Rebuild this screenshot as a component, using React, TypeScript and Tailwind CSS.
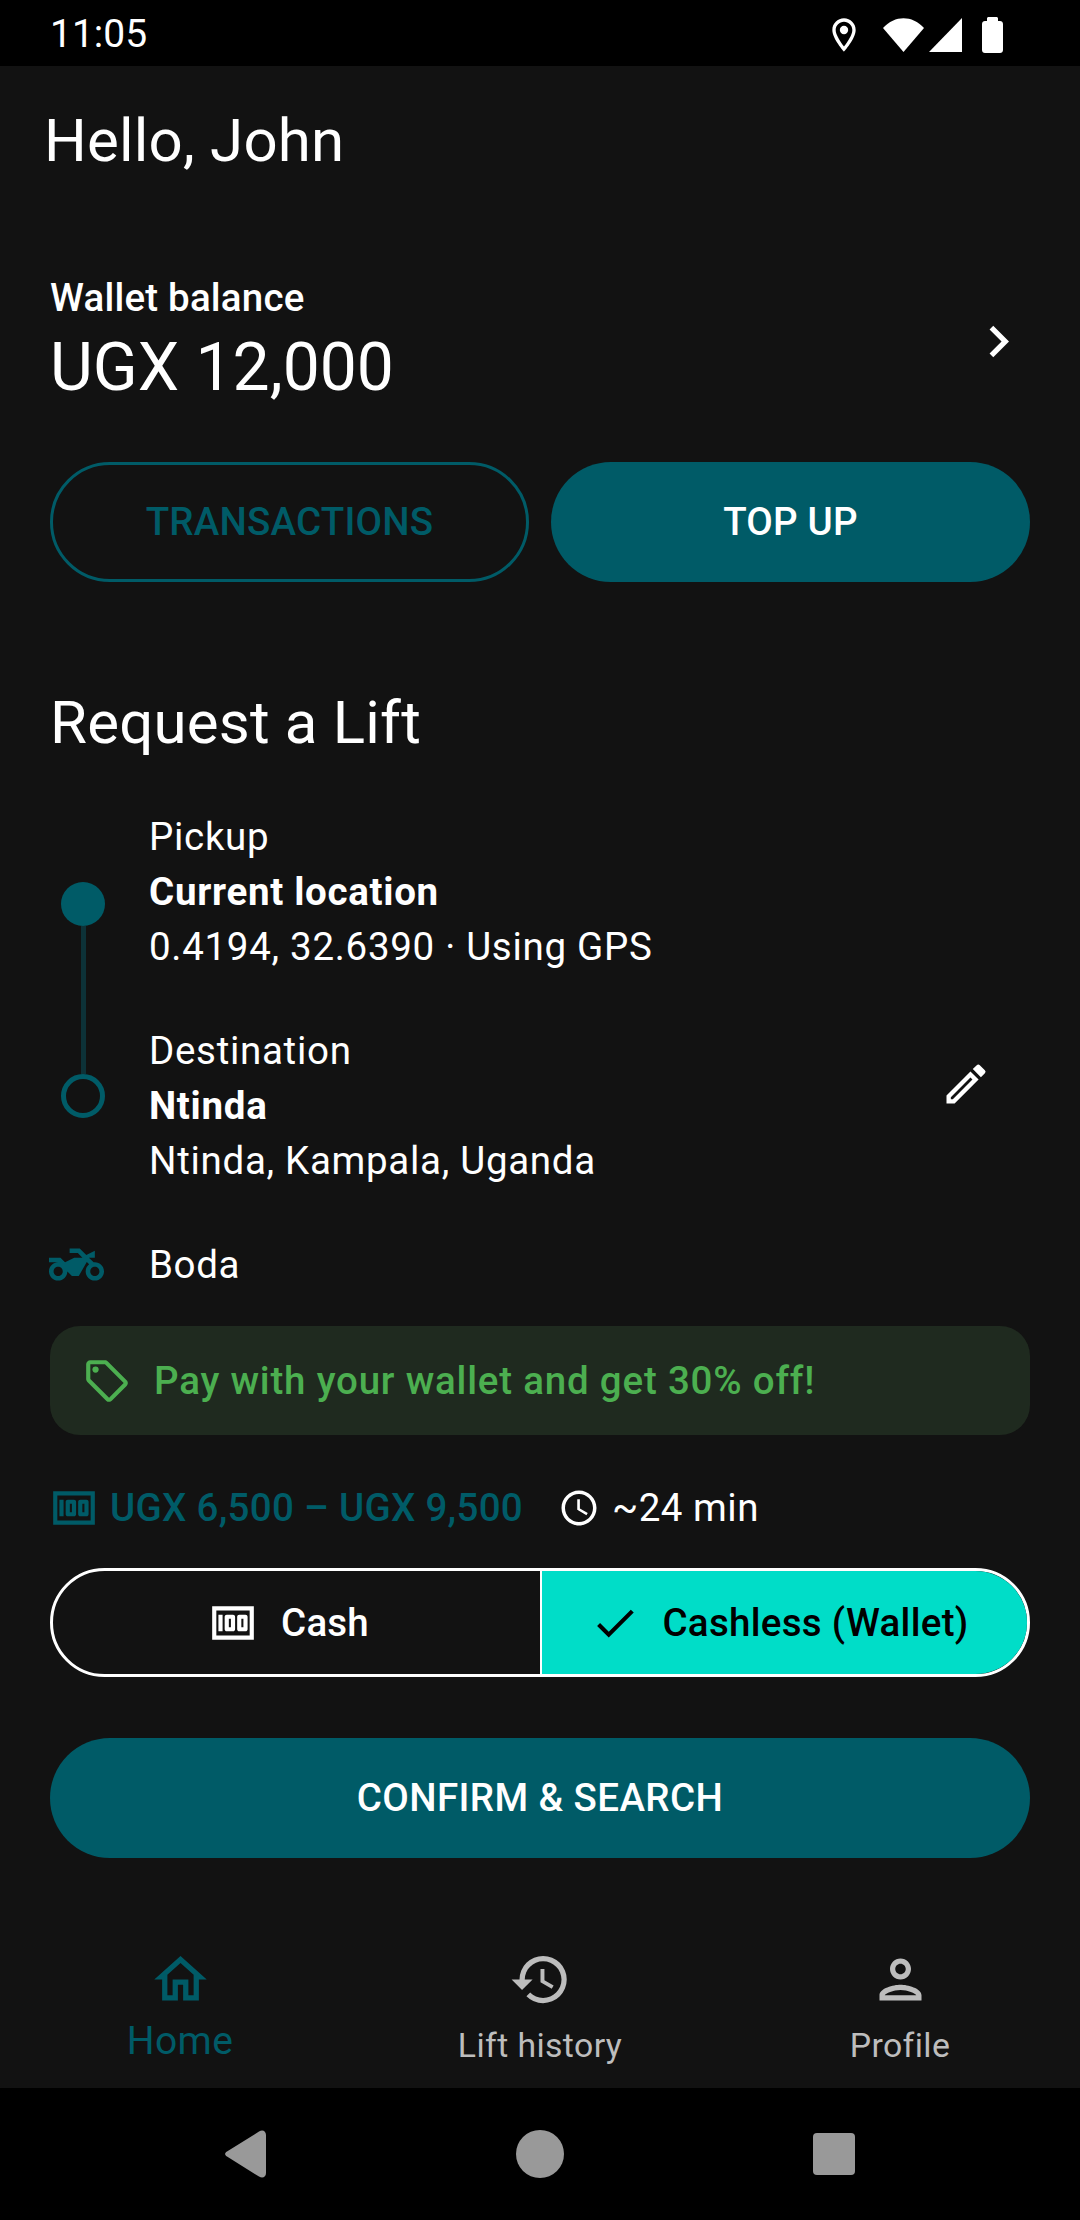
import React from "react";
import {
  MdCheck,
  MdChevronRight,
  MdHistory,
  MdOutlineAccessTime,
  MdOutlineEdit,
  MdOutlineHome,
  MdOutlineLocalOffer,
  MdOutlineLocationOn,
  MdOutlineMoney,
  MdOutlinePerson,
  MdTwoWheeler,
} from "react-icons/md";

function StatusBar() {
  return (
    <div className="h-[66px] shrink-0 bg-black flex items-center pt-[3px] pl-[50px] text-white">
      <span className="text-[39px] leading-[63px]">11:05</span>
      <div className="ml-auto flex items-center pr-[77px]">
        <MdOutlineLocationOn className="w-[40px] h-[40px]" />
        <svg width="41" height="34" viewBox="0 0 41 34" className="ml-[19px]" fill="white">
          <path d="M20.5 34 0 10C12-3 29-3 41 10Z" />
        </svg>
        <svg width="33" height="34" viewBox="0 0 33 34" className="ml-[5px]" fill="white">
          <path d="M33 0V34H0Z" />
        </svg>
        <svg width="21" height="36" viewBox="0 0 21 36" className="ml-[20px]" fill="white">
          <path d="M5 4V1.5C5 .7 5.700 0 6.500 0h8C15.300 0 16 .7 16 1.500V4h2c1.700 0 3 1.300 3 3v26c0 1.700-1.300 3-3 3H3c-1.700 0-3-1.300-3-3V7c0-1.700 1.300-3 3-3Z" />
        </svg>
      </div>
    </div>
  );
}

function RouteText({ label, name, detail }: { label: string; name: string; detail: string }) {
  return (
    <div className="text-white text-[38.5px] leading-[55px] tracking-[0.7px]">
      <div>{label}</div>
      <div className="font-bold tracking-[0.7px]">{name}</div>
      <div>{detail}</div>
    </div>
  );
}

function NavItem({
  icon,
  label,
  active,
}: {
  icon: React.ReactNode;
  label: string;
  active?: boolean;
}) {
  return (
    <div className="flex flex-col items-center">
      {icon}
      {active ? (
        <span className="mt-[2px] text-[#005b67] text-[39px] leading-[56px] tracking-[0.4px]">{label}</span>
      ) : (
        <span className="mt-[7px] text-[#bdbdbd] text-[33.8px] leading-[56px] tracking-[0.4px]">{label}</span>
      )}
    </div>
  );
}

export default function App() {
  return (
    <div className="w-[1080px] h-[2220px] flex flex-col bg-[#121212] font-['Roboto',sans-serif] overflow-hidden">
      <StatusBar />

      <div className="flex-1 flex flex-col">
        <h1 className="mt-[38px] pl-[44px] text-white text-[60px] leading-[74px] font-normal tracking-[0.2px]">
          Hello, John
        </h1>

        <div className="mt-[93px] pl-[50px] pr-[50px] flex items-center">
          <div className="flex-1">
            <div className="text-white text-[38.5px] leading-[54px] font-medium tracking-[0.2px]">Wallet balance</div>
            <div className="text-white text-[66px] leading-[86px]">UGX 12,000</div>
          </div>
          <MdChevronRight className="text-white w-[63px] h-[63px]" />
        </div>

        <div className="mt-[51px] px-[50px] grid grid-cols-2 gap-[22px]">
          <button className="h-[120px] rounded-[60px] border-[3px] border-[#005b67] text-[#005b67] text-[38.5px] font-medium tracking-[0.2px]">
            TRANSACTIONS
          </button>
          <button className="h-[120px] rounded-[60px] bg-[#005b67] text-white text-[38.5px] font-medium tracking-[0.2px]">
            TOP UP
          </button>
        </div>

        <h2 className="mt-[104px] pl-[50px] text-white text-[60px] leading-[74px] font-normal tracking-[0.2px]">
          Request a Lift
        </h2>

        <div className="mt-[47px] flex pl-[61px] pr-[88px]">
          <div className="w-[44px] shrink-0 pt-[75px] flex flex-col items-center">
            <div className="w-[44px] h-[44px] rounded-full bg-[#005b67]" />
            <div className="w-[5px] h-[148px] bg-[#0d3238]" />
            <div className="w-[44px] h-[44px] rounded-full border-[5px] border-[#005b67]" />
          </div>
          <div className="ml-[44px] pt-[2px] flex-1 flex flex-col gap-[49px]">
            <RouteText label="Pickup" name="Current location" detail="0.4194, 32.6390 · Using GPS" />
            <div className="flex items-center">
              <div className="flex-1">
                <RouteText label="Destination" name="Ntinda" detail="Ntinda, Kampala, Uganda" />
              </div>
              <MdOutlineEdit className="text-white w-[52px] h-[52px] mb-[44px]" />
            </div>
          </div>
        </div>

        <div className="mt-[49px] pl-[49px] flex items-center h-[55px]">
          <MdTwoWheeler className="text-[#005b67] w-[55px] h-[55px]" />
          <span className="ml-[45px] text-white text-[38.5px] tracking-[0.6px]">Boda</span>
        </div>

        <div className="mt-[34px] mx-[50px] h-[109px] rounded-[30px] bg-[#1f2a1f] flex items-center pl-[32px]">
          <MdOutlineLocalOffer className="text-[#4caf50] w-[50px] h-[50px]" />
          <span className="ml-[22px] text-[#4caf50] text-[38.5px] font-medium tracking-[0.8px]">
            Pay with your wallet and get 30% off!
          </span>
        </div>

        <div className="mt-[45px] pl-[49px] flex items-center h-[55px]">
          <MdOutlineMoney className="text-[#005b67] w-[50px] h-[50px]" />
          <span className="ml-[11px] text-[#005b67] text-[38.5px] font-medium tracking-[0.3px]">
            UGX 6,500 – UGX 9,500
          </span>
          <MdOutlineAccessTime className="ml-[35px] text-white w-[42px] h-[42px]" />
          <span className="ml-[12px] text-white text-[38.5px] tracking-[0.5px]">~24 min</span>
        </div>

        <div className="mt-[33px] mx-[50px] h-[109px] rounded-[55px] border-[3px] border-white overflow-hidden flex">
          <div className="w-[487px] pr-[16px] flex items-center justify-center text-white text-[38.5px] font-medium tracking-[0.2px]">
            <MdOutlineMoney className="w-[50px] h-[50px]" />
            <span className="ml-[23px]">Cash</span>
          </div>
          <div className="flex-1 pr-[10px] border-l-[2px] border-white bg-[#00ddc8] flex items-center justify-center text-black text-[38.5px] font-medium tracking-[0.3px]">
            <MdCheck className="w-[50px] h-[50px]" />
            <span className="ml-[22px]">Cashless (Wallet)</span>
          </div>
        </div>

        <button className="mt-[61px] mx-[50px] h-[120px] rounded-[60px] bg-[#005b67] text-white text-[38.5px] font-medium tracking-[0.4px]">
          CONFIRM &amp; SEARCH
        </button>

        <div className="mt-[90px] grid grid-cols-3">
          <NavItem active label="Home" icon={<MdOutlineHome className="text-[#005b67] w-[63px] h-[63px]" />} />
          <NavItem label="Lift history" icon={<MdHistory className="text-[#bdbdbd] w-[63px] h-[63px]" />} />
          <NavItem label="Profile" icon={<MdOutlinePerson className="text-[#bdbdbd] w-[63px] h-[63px]" />} />
        </div>
      </div>

      <div className="h-[132px] shrink-0 bg-black flex justify-center items-center">
        <div className="w-[294px] flex justify-center">
          <svg width="42" height="48" viewBox="0 0 42 48" fill="#999999">
            <path d="M2 21.500 34 1.500C37.500-.8 41 1 41 5V43C41 47 37.500 48.800 34 46.500L2 26.500C-.5 25-.5 23 2 21.500Z" />
          </svg>
        </div>
        <div className="w-[294px] flex justify-center">
          <div className="w-[48px] h-[48px] rounded-full bg-[#999999]" />
        </div>
        <div className="w-[294px] flex justify-center">
          <div className="w-[42px] h-[42px] rounded-[4px] bg-[#999999]" />
        </div>
      </div>
    </div>
  );
}
